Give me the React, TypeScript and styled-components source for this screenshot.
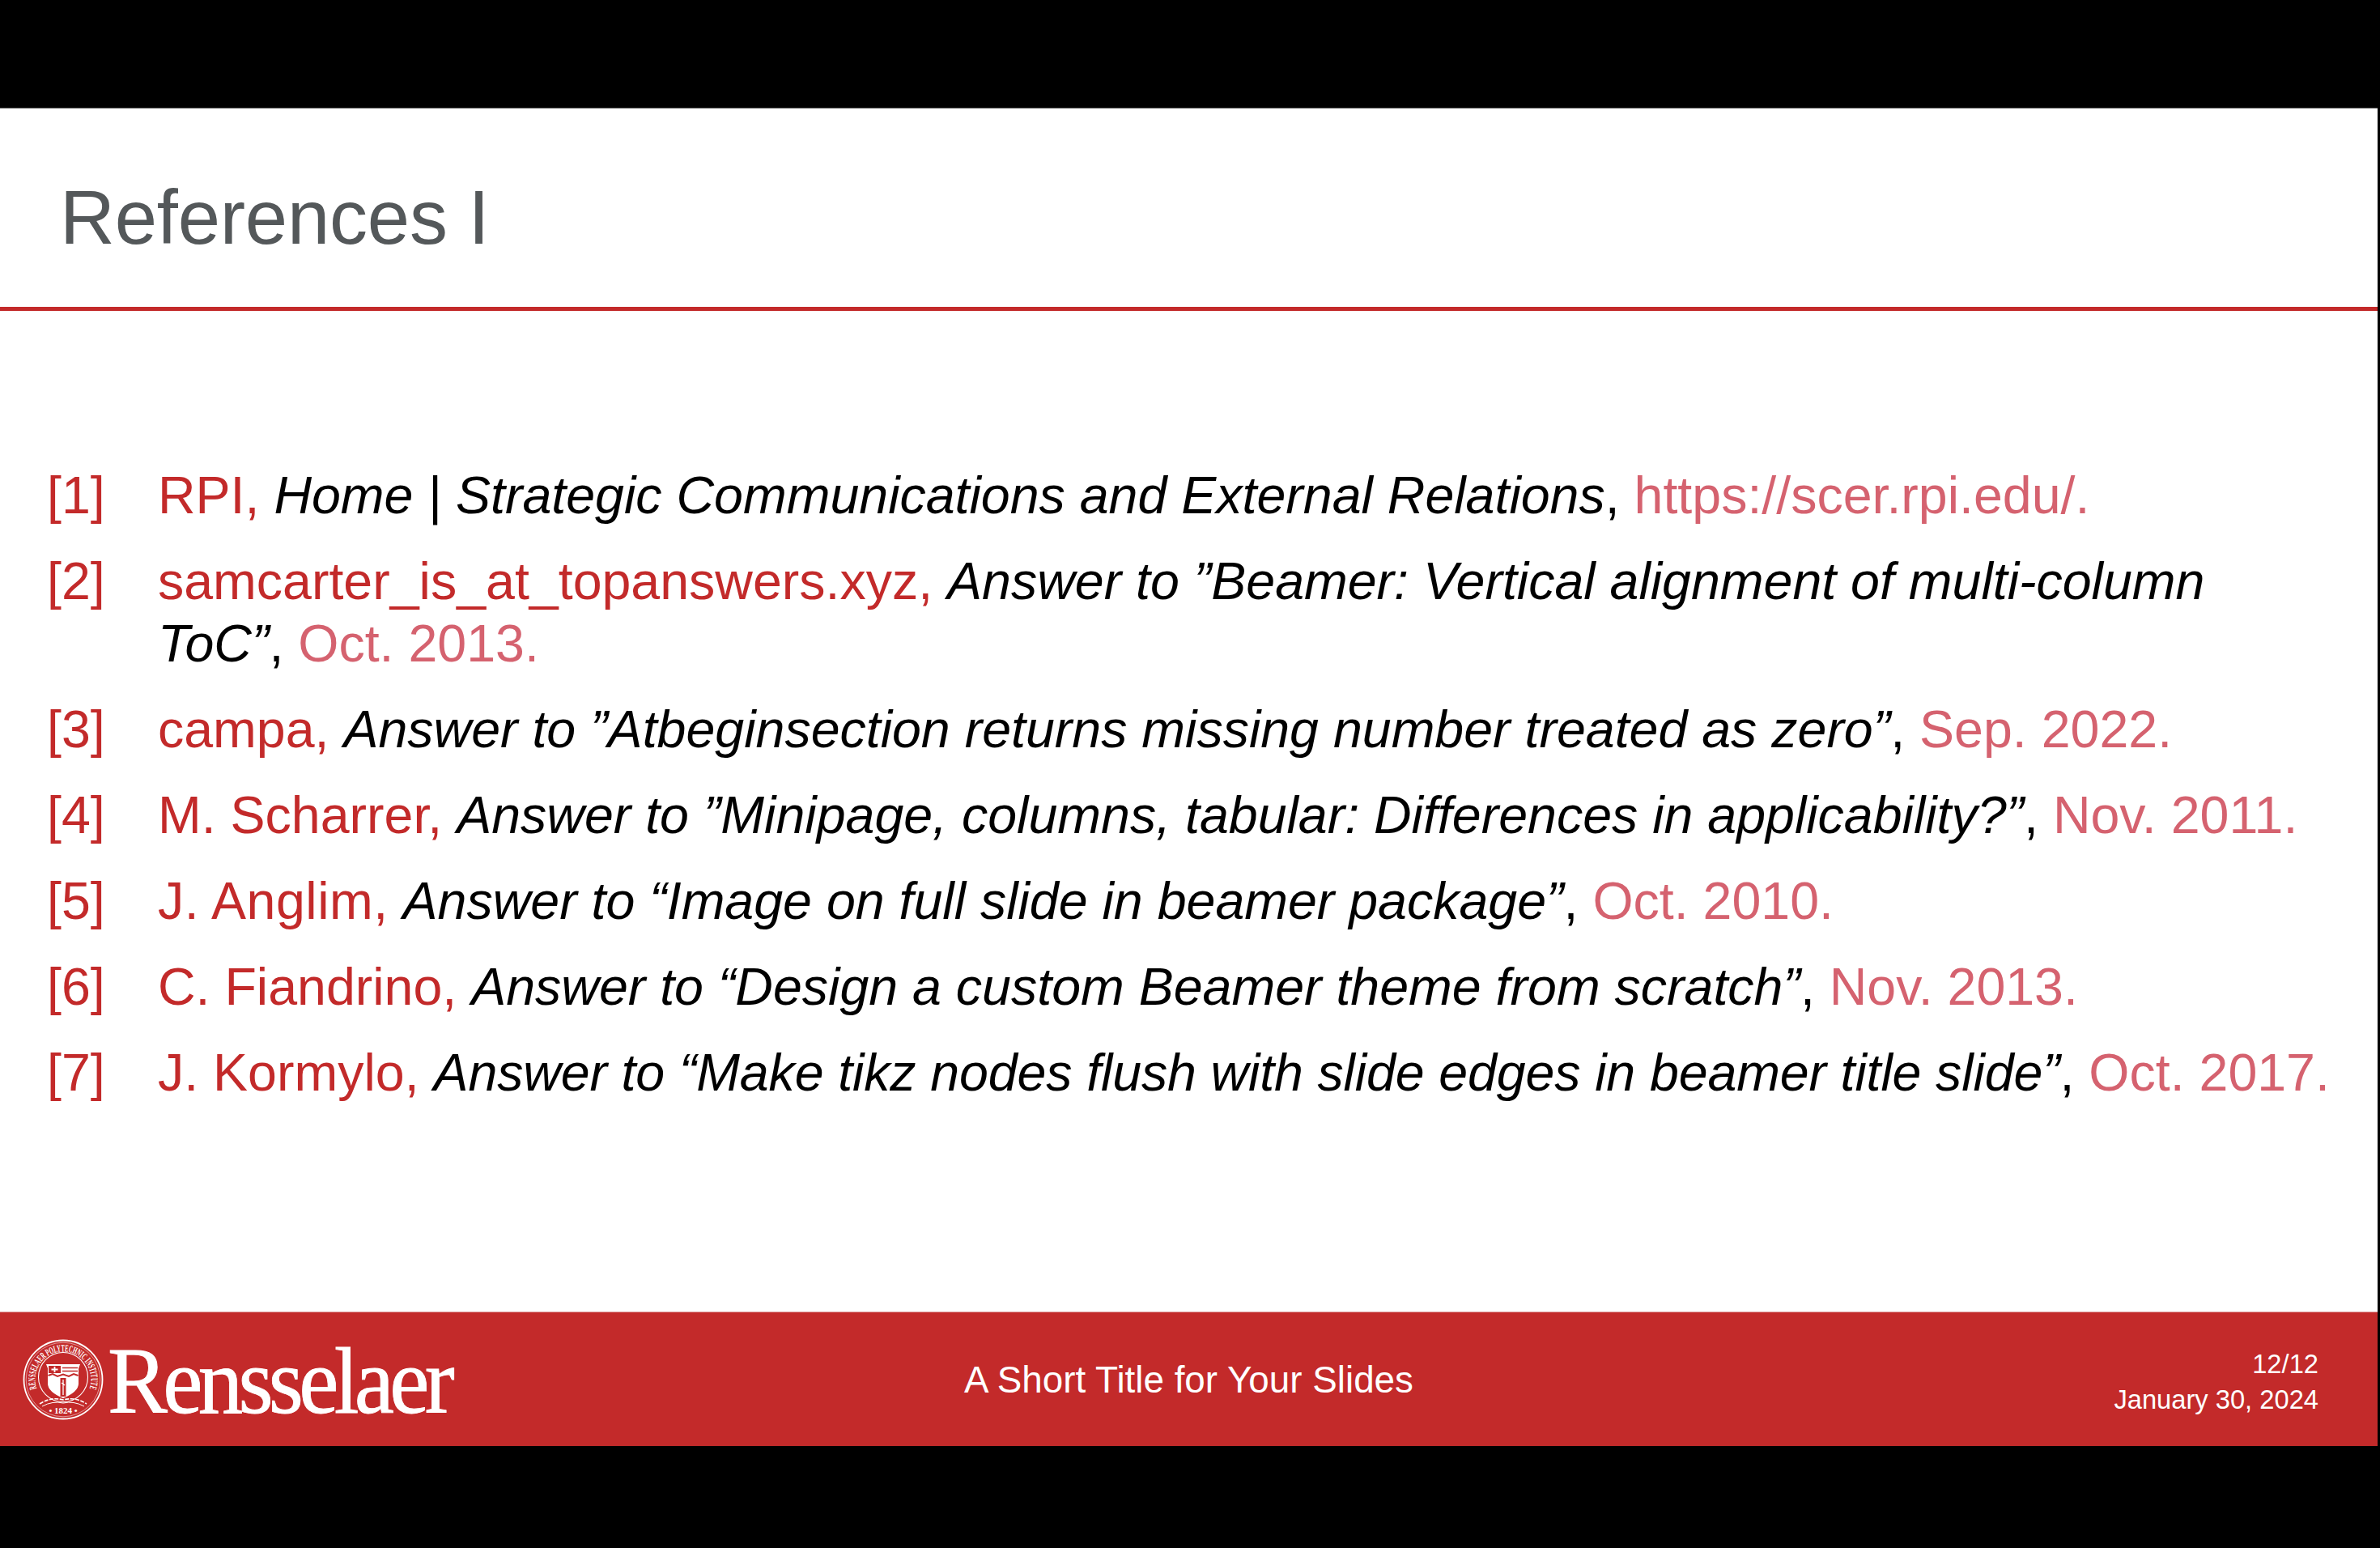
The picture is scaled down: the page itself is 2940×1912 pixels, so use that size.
// App.tsx
import React from 'react';
import styled, { createGlobalStyle } from 'styled-components';

interface Reference {
  id: number;
  author: string;
  title: React.ReactNode;
  date: string;
  authorSpacing?: number;
  titleSpacing?: number;
}

const references: Reference[] = [
  {
    id: 1,
    author: 'RPI,',
    title: 'Home | Strategic Communications and External Relations',
    date: 'https://scer.rpi.edu/.',
  },
  {
    id: 2,
    author: 'samcarter_is_at_topanswers.xyz,',
    title: (
      <>
        Answer to ”Beamer: Vertical alignment of multi-column
        <br />
        ToC”
      </>
    ),
    date: 'Oct. 2013.',
  },
  {
    id: 3,
    author: 'campa,',
    title: 'Answer to ”Atbeginsection returns missing number treated as zero”',
    date: 'Sep. 2022.',
  },
  {
    id: 4,
    author: 'M. Scharrer,',
    title: 'Answer to ”Minipage, columns, tabular: Differences in applicability?”',
    date: 'Nov. 2011.',
  },
  {
    id: 5,
    author: 'J. Anglim,',
    authorSpacing: 0.5,
    title: 'Answer to “Image on full slide in beamer package”',
    date: 'Oct. 2010.',
  },
  {
    id: 6,
    author: 'C. Fiandrino,',
    title: 'Answer to “Design a custom Beamer theme from scratch”',
    date: 'Nov. 2013.',
  },
  {
    id: 7,
    author: 'J. Kormylo,',
    title: 'Answer to “Make tikz nodes flush with slide edges in beamer title slide”',
    titleSpacing: -0.13,
    date: 'Oct. 2017.',
  },
];

const RED = '#c32a2a';

const Seal: React.FC = () => (
  <svg width="100" height="100" viewBox="0 0 100 100">
    <defs>
      <path id="sealRing" d="M 17.4 61.2 A 34.5 34.5 0 1 1 82.6 61.2" />
    </defs>
    <circle cx="50" cy="50" r="48.5" fill="none" stroke="#fff" strokeWidth="1.8" />
    <circle cx="50" cy="50" r="45.8" fill="none" stroke="#fff" strokeWidth="0.5" />
    <circle cx="50" cy="47" r="30.5" fill="none" stroke="#fff" strokeWidth="1.1" />
    <text fill="#fff" fontFamily="'Liberation Serif', serif" fontSize="12.5" fontWeight="700">
      <textPath href="#sealRing" textLength="131" lengthAdjust="spacingAndGlyphs">
        RENSSELAER POLYTECHNIC INSTITUTE
      </textPath>
    </text>
    <text
      x="50"
      y="92"
      fill="#fff"
      fontFamily="'Liberation Serif', serif"
      fontSize="11"
      fontWeight="700"
      textAnchor="middle"
    >
      • 1824 •
    </text>
    {/* shield */}
    <path d="M29 31 H71 L69 36 V55 Q69 65 50 73 Q31 65 31 55 V36 Z" fill="#fff" />
    <rect x="32" y="33" width="15" height="9" fill={RED} />
    <path d="M39.5 34 V41 M35.5 37.5 H43.5" stroke="#fff" strokeWidth="1.8" />
    <path d="M49 35.5 H68 M49 39.5 H68" stroke={RED} strokeWidth="1.6" />
    <path d="M31.5 45 L37 43 L43 46 L50 43.5 L57 46 L63 43 L68.5 45" fill="none" stroke={RED} strokeWidth="2" />
    <rect x="46.5" y="48" width="7" height="23" fill={RED} />
    <path d="M50 50 V69 M48 54 L52 57" stroke="#fff" strokeWidth="1.3" />
    {/* ribbon */}
    <path d="M21 80 Q35 71 50 75 Q65 71 79 80" fill="none" stroke="#fff" strokeWidth="1.6" strokeDasharray="5 1.5" />
    <path d="M24 83 Q37 76 50 79 Q63 76 76 83" fill="none" stroke="#fff" strokeWidth="1" />
  </svg>
);

const Wordmark: React.FC = () => (
  <svg width="520" height="136" viewBox="0 0 520 136">
    <text
      x="0"
      y="109"
      fill="#fff"
      stroke="#fff"
      strokeWidth="0.8"
      fontFamily="'Liberation Serif', serif"
      fontSize="116"
      letterSpacing="-6"
      textLength="423"
      lengthAdjust="spacingAndGlyphs"
    >
      Rensselaer
    </text>
  </svg>
);

const App: React.FC = () => (
  <>
    <GlobalStyle />
    <Page>
      <Slide>
        <TitleBar>
          <Title>References I</Title>
        </TitleBar>
        <Content>
          <ReferenceList>
            {references.map((ref) => (
              <ReferenceItem key={ref.id}>
                <RefNumber>[{ref.id}]</RefNumber>
                <RefBody>
                  <Author $spacing={ref.authorSpacing}>{ref.author}</Author>{' '}
                  <RefTitle $spacing={ref.titleSpacing}>{ref.title}</RefTitle>,{' '}
                  <RefDate>{ref.date}</RefDate>
                </RefBody>
              </ReferenceItem>
            ))}
          </ReferenceList>
        </Content>
        <Footer>
          <Logo>
            <Seal />
            <Wordmark />
          </Logo>
          <ShortTitle>A Short Title for Your Slides</ShortTitle>
          <FooterInfo>
            <span>12/12</span>
            <span>January 30, 2024</span>
          </FooterInfo>
        </Footer>
      </Slide>
    </Page>
  </>
);

export default App;

// Styled Components
const GlobalStyle = createGlobalStyle`
  html, body {
    margin: 0;
    padding: 0;
    background: #000;
  }
`;

const Page = styled.div`
  width: 2940px;
  height: 1912px;
  box-sizing: border-box;
  padding: 133px 3px 126px 0;
  background-color: #000;
  font-family: 'Liberation Sans', Arial, sans-serif;
  overflow: hidden;
`;

const Slide = styled.div`
  display: flex;
  flex-direction: column;
  box-sizing: border-box;
  height: 100%;
  border-top: 1px solid #5a5a5a;
  background-color: #fff;
`;

const TitleBar = styled.header`
  flex: none;
  display: flex;
  align-items: center;
  box-sizing: border-box;
  height: 250px;
  padding: 25px 0 0 74px;
  border-bottom: 5px solid ${RED};
`;

const Title = styled.h1`
  margin: 0;
  font-size: 94px;
  font-weight: 400;
  line-height: 1;
  letter-spacing: -0.2px;
  color: #54585a;
`;

const Content = styled.main`
  flex: 1;
  display: flex;
  align-items: center;
  padding: 0 0 67px 58px;
`;

const ReferenceList = styled.ol`
  display: flex;
  flex-direction: column;
  gap: 29px;
  margin: 0;
  padding: 0;
  list-style: none;
`;

const ReferenceItem = styled.li`
  display: grid;
  grid-template-columns: 137px 1fr;
  font-size: 64.5px;
  line-height: 77px;
  white-space: nowrap;
  color: #000;
`;

const RefNumber = styled.span`
  color: ${RED};
`;

const RefBody = styled.span``;

const Author = styled.span<{ $spacing?: number }>`
  color: ${RED};
  letter-spacing: ${(p) => p.$spacing ?? 0}px;
`;

const RefTitle = styled.em<{ $spacing?: number }>`
  font-style: italic;
  letter-spacing: ${(p) => p.$spacing ?? 0}px;
`;

const RefDate = styled.span`
  color: #d5626f;
`;

const Footer = styled.footer`
  flex: none;
  display: grid;
  grid-template-columns: 1fr auto 1fr;
  align-items: center;
  box-sizing: border-box;
  height: 166px;
  border-top: 1px solid #dc9494;
  background-color: ${RED};
  color: #fff;
`;

const Logo = styled.div`
  display: flex;
  align-items: center;
  gap: 5px;
  padding-left: 28px;
`;

const ShortTitle = styled.div`
  padding-top: 2px;
  font-size: 45.8px;
  line-height: 1;
`;

const FooterInfo = styled.div`
  display: flex;
  flex-direction: column;
  align-items: flex-end;
  padding: 6px 73px 0 0;
  font-size: 32.7px;
  line-height: 44px;
`;
